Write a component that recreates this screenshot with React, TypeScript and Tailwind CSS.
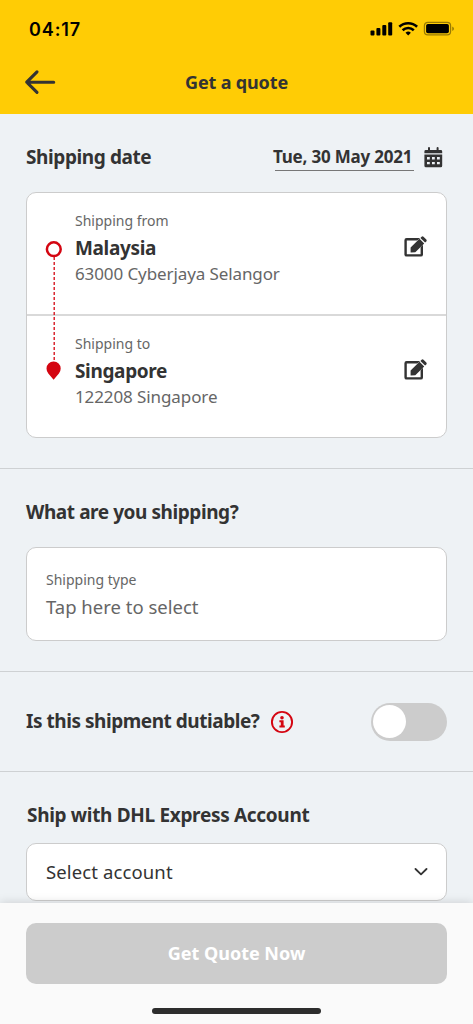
import { useState } from 'react';

interface Stop {
    label: string;
    country: string;
    address: string;
}

const stops: Stop[] = [
    { label: 'Shipping from', country: 'Malaysia', address: '63000 Cyberjaya Selangor' },
    { label: 'Shipping to', country: 'Singapore', address: '122208 Singapore' },
];

const StatusIcons = () => (
    <svg width="85" height="16" viewBox="0 0 85 16" fill="#000">
        <rect x="0.5" y="9.500" width="4" height="5" rx="1" />
        <rect x="6.400" y="6.900" width="4" height="7.600" rx="1" />
        <rect x="12.300" y="4.100" width="4" height="10.400" rx="1" />
        <rect x="18.200" y="1.200" width="4" height="13.300" rx="1" />
        <g fill="none" stroke="#000" strokeWidth="2.600">
            <path d="M29.300 5.700a13 13 0 0 1 17.800 0" />
            <path d="M32.600 9.200a8.300 8.300 0 0 1 11.200 0" />
        </g>
        <path d="M38.200 14.500l-2.700-2.800a4.200 4.200 0 0 1 5.400 0z" />
        <rect x="54.400" y="1.300" width="26.200" height="12.600" rx="3.400" fill="none" stroke="#000" strokeOpacity="0.4" strokeWidth="1.200" />
        <rect x="56.100" y="3" width="22.800" height="9.200" rx="1.800" />
        <path d="M82.300 5.500v4.400q1.600-.7 1.600-2.200t-1.600-2.200z" fillOpacity="0.45" />
    </svg>
);

const BackArrow = () => (
    <svg width="32" height="26" viewBox="0 0 32 26" fill="none" stroke="#333" strokeWidth="3.1" strokeLinecap="round" strokeLinejoin="round">
        <path d="M13 2.800L2.700 13.200l10.300 10.200M3 13.200h26.700" />
    </svg>
);

const CalendarIcon = () => (
    <svg width="19" height="21" viewBox="0 0 19 21">
        <path
            fill="#333"
            fillRule="evenodd"
            d="M4 1q0-1 1-1t1 1v2h6.600V1q0-1 1-1t1 1v2h2.200q1.400 0 1.400 1.400V6.200H.4V4.400Q.4 3 1.800 3H4zM.4 7.400h17.800v11.300q0 1.500-1.500 1.500H1.900Q.4 20.200.4 18.700zM3 10v2.400h2.800V10zM8 10v2.400h2.800V10zM13 10v2.400h2.800V10zM3 14.900v2.400h2.800v-2.400zM8 14.900v2.400h2.800v-2.400zM13 14.900v2.400h2.800v-2.400z"
        />
    </svg>
);

const EditIcon = () => (
    <svg width="24" height="22" viewBox="0 0 24 22">
        <rect x="1.600" y="3.200" width="16.200" height="16.200" rx="1" fill="none" stroke="#333" strokeWidth="2.400" />
        <path d="M12.500 5.400L17 .9l4.900 4.900-5.600 5.600z" fill="#fff" />
        <path d="M6.600 16.500v-4.900l8.900-8.900 4.700 4.700-8.900 8.900zM16.400 1.900l1.200-1.200q1-.8 1.900 0l2.800 2.800q.8 1 0 1.900l-1.200 1.200z" fill="#333" />
    </svg>
);

const InfoIcon = () => (
    <svg width="24" height="24" viewBox="0 0 24 24" fill="#d40511">
        <circle cx="12" cy="12" r="10.1" fill="none" stroke="#d40511" strokeWidth="1.900" />
        <circle cx="12" cy="7.700" r="1.800" />
        <path d="M9.400 10.200h4.200v5.400h1.200v2H9.400v-2h1.400v-3.400H9.400z" />
    </svg>
);

// marker, dashed connector and pin that join the two stops
const RouteLine = () => (
    <svg className="absolute left-[17px] top-[47px]" width="20" height="142" viewBox="0 0 20 142">
        <circle cx="9.800" cy="9.200" r="6.900" fill="#fff" stroke="#d40511" strokeWidth="2.500" />
        <path d="M10.200 17v104" stroke="#d40511" strokeWidth="1.300" strokeDasharray="3 2" />
        <path d="M9.600 121.500a7 7 0 0 1 7.100 7q0 2.600-1.800 5l-5.300 6.300-5.300-6.300q-1.800-2.400-1.800-5a7 7 0 0 1 7.100-7z" fill="#d40511" />
    </svg>
);

const App = () => {
    const [dutiable, setDutiable] = useState(false);

    return (
        <div className="flex flex-col w-full h-[1024px] overflow-hidden bg-[#eef2f5] text-[#333] font-['Noto_Sans',sans-serif]">
            <header className="shrink-0 h-[114px] bg-[#ffcc05]">
                <div className="flex items-center justify-between h-[58px] pl-[29px] pr-[18px]">
                    <span className="font-['Inter',sans-serif] text-[18px] font-semibold tracking-[0.9px] text-black">04:17</span>
                    <StatusIcons />
                </div>
                <div className="grid grid-cols-[32px_1fr_32px] items-center h-[48px] px-[24px]">
                    <button aria-label="Back">
                        <BackArrow />
                    </button>
                    <h1 className="text-center text-[18px] font-bold tracking-[-0.15px]">Get a quote</h1>
                </div>
            </header>

            <main className="flex-1 min-h-0 overflow-hidden">
                <section className="h-[355px] px-[26px] border-b border-[#ced1d3]">
                    <div className="flex items-center justify-between h-[78px] pt-[8px]">
                        <h2 className="text-[19px] font-bold tracking-[-0.4px]">Shipping date</h2>
                        <div className="flex items-center gap-[10px] pr-[4px]">
                            <span className="w-[139px] h-[28px] border-b border-[#777] text-[17px] leading-[28px] font-bold tracking-[-0.2px] whitespace-nowrap">
                                <span className="-ml-[2px]">Tue, 30 May 2021</span>
                            </span>
                            <CalendarIcon />
                        </div>
                    </div>
                    <div className="relative h-[246px] rounded-[10px] border border-[#ccc] bg-white">
                        {stops.map((stop, idx) => (
                            <div
                                key={stop.label}
                                className={`flex justify-between pl-[48px] pr-[18px] pt-[16px] ${idx > 0 ? 'h-[123px] border-t-2 border-[#d9d9d9]' : 'h-[121px]'}`}
                            >
                                <div>
                                    <p className="text-[14px] leading-[24px] text-[#666]">{stop.label}</p>
                                    <p className="text-[19px] leading-[30px] font-bold tracking-[-0.35px]">{stop.country}</p>
                                    <p className="text-[17px] leading-[21px] tracking-[-0.1px] text-[#666]">{stop.address}</p>
                                </div>
                                <button aria-label="Edit" className="self-start mt-[27px]">
                                    <EditIcon />
                                </button>
                            </div>
                        ))}
                        <RouteLine />
                    </div>
                </section>

                <section className="h-[203px] px-[26px] border-b border-[#ced1d3]">
                    <h2 className="h-[78px] pt-[8px] text-[19px] leading-[70px] font-bold tracking-[-0.43px]">What are you shipping?</h2>
                    <div className="h-[94px] rounded-[10px] border border-[#ccc] bg-white px-[19px] pt-[20px] text-[#666]">
                        <p className="text-[14px] leading-[24px]">Shipping type</p>
                        <p className="text-[18.5px] leading-[30px]">Tap here to select</p>
                    </div>
                </section>

                <section className="flex items-center h-[100px] px-[26px] border-b border-[#ced1d3]">
                    <h2 className="text-[19px] font-bold tracking-[-0.46px]">Is this shipment dutiable?</h2>
                    <span className="ml-[11px]">
                        <InfoIcon />
                    </span>
                    <button
                        role="switch"
                        aria-checked={dutiable}
                        aria-label="Dutiable"
                        onClick={() => setDutiable(!dutiable)}
                        className={`ml-auto flex items-center w-[76px] h-[38px] rounded-full px-[2px] ${dutiable ? 'justify-end bg-[#d40511]' : 'bg-[#ccc]'}`}
                    >
                        <span className="w-[33px] h-[33px] rounded-full bg-white" />
                    </button>
                </section>

                <section className="px-[26px]">
                    <h2 className="h-[71px] pt-[8px] pl-px text-[19px] leading-[70px] font-bold tracking-[-0.32px]">Ship with DHL Express Account</h2>
                    <button className="flex items-center justify-between w-full h-[58px] rounded-[10px] border border-[#ccc] bg-white pl-[19px] pr-[18px]">
                        <span className="pb-px text-[18.5px] tracking-[0.12px]">Select account</span>
                        <svg width="14" height="8" viewBox="0 0 14 8" fill="none" stroke="#333" strokeWidth="1.800" strokeLinecap="round" strokeLinejoin="round">
                            <path d="M1.500 1L7 6.400 12.500 1" />
                        </svg>
                    </button>
                </section>
            </main>

            <footer className="relative shrink-0 flex flex-col items-center h-[121px] px-[26px] pt-[20px] bg-[#fafafa] shadow-[0_-1px_9px_rgba(0,0,0,0.13)]">
                <button className="w-full h-[61px] rounded-[10px] bg-[#ccc] text-[18px] font-bold text-white">Get Quote Now</button>
                <div className="mt-[24px] w-[169px] h-[6px] rounded-full bg-[#2d2d2d]" />
            </footer>
        </div>
    );
};

export default App;
